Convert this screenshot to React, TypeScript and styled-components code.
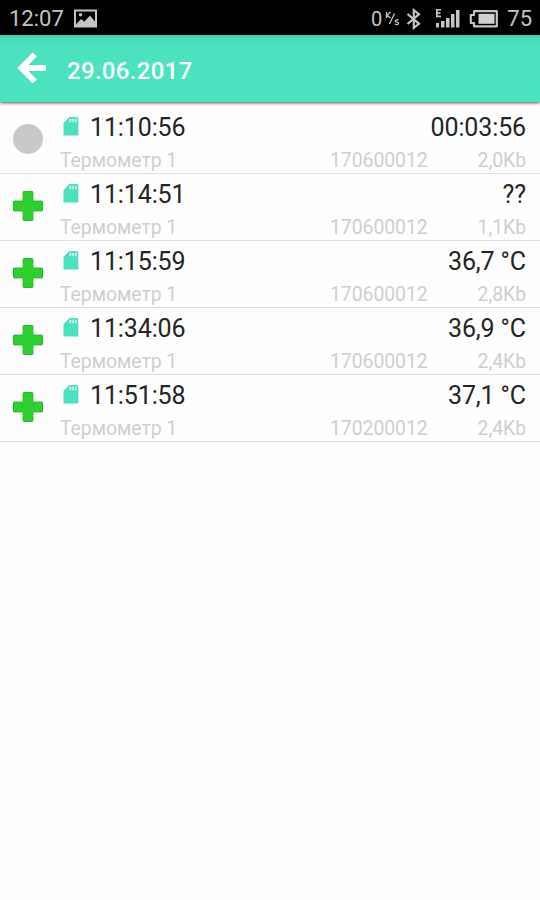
import styled, { createGlobalStyle } from 'styled-components';

type RecordStatus = 'empty' | 'new';

interface MeasureRecord {
  time: string;
  value: string;
  device: string;
  serial: string;
  size: string;
  status: RecordStatus;
}

const records: MeasureRecord[] = [
  { time: '11:10:56', value: '00:03:56', device: 'Термометр 1', serial: '170600012', size: '2,0Kb', status: 'empty' },
  { time: '11:14:51', value: '??', device: 'Термометр 1', serial: '170600012', size: '1,1Kb', status: 'new' },
  { time: '11:15:59', value: '36,7 °C', device: 'Термометр 1', serial: '170600012', size: '2,8Kb', status: 'new' },
  { time: '11:34:06', value: '36,9 °C', device: 'Термометр 1', serial: '170600012', size: '2,4Kb', status: 'new' },
  { time: '11:51:58', value: '37,1 °C', device: 'Термометр 1', serial: '170200012', size: '2,4Kb', status: 'new' },
];

const GlobalStyle = createGlobalStyle`
  * {
    box-sizing: border-box;
  }
  body {
    margin: 0;
    background-color: #fefefe;
    font-family: Roboto, 'Liberation Sans', sans-serif;
  }
  svg {
    display: block;
    flex: none;
  }
`;

const Screen = styled.div`
  width: 540px;
  height: 900px;
  background-color: #fefefe;
  overflow: hidden;
`;

const StatusBar = styled.div`
  display: flex;
  align-items: center;
  justify-content: space-between;
  height: 35px;
  padding: 2px 8px 0 9px;
  background-color: #000000;
  color: #c4c4c4;
  font-size: 22px;
  line-height: 26px;
`;

const StatusGroup = styled.div<{ $gap: number }>`
  display: flex;
  align-items: center;
  gap: ${({ $gap }) => $gap}px;
`;

const Speed = styled.span`
  display: flex;
  align-items: center;
  gap: 3px;
  font-size: 20px;
`;

const AppBar = styled.div`
  display: flex;
  align-items: center;
  gap: 20px;
  height: 67px;
  padding: 0 17px;
  background: linear-gradient(#43c9a7 0, #4ad8b6 3px, #4ce2c0 12px, #4ce3c1 100%);
  box-shadow: 0 1px 3px #000000aa;
`;

const Title = styled.h1`
  margin: 5px 0 0;
  color: #ffffff;
  font-size: 24px;
  font-weight: 500;
  line-height: 30px;
  letter-spacing: 0.3px;
`;

const List = styled.ul`
  margin: 0;
  padding: 5px 0 0;
  list-style: none;
`;

const Row = styled.li`
  display: flex;
  height: 67px;
  padding-right: 14px;
  border-bottom: 1px solid #e0e0e0;
`;

const StatusCell = styled.div`
  display: flex;
  align-items: center;
  justify-content: center;
  width: 56px;
  flex: none;
  padding-bottom: 2px;
`;

const EmptyMark = styled.div`
  width: 30px;
  height: 30px;
  border-radius: 50%;
  background-color: #c9c9c9;
`;

const Details = styled.div`
  flex: 1;
  padding-left: 4px;
`;

const MainLine = styled.div`
  display: flex;
  align-items: center;
  height: 42px;
  color: #242424;
  font-size: 25px;
  line-height: 42px;
  letter-spacing: -0.12px;

  svg {
    margin-bottom: 5px;
  }
`;

const Time = styled.span`
  flex: 1;
  padding-left: 10px;
`;

const SubLine = styled.div`
  display: grid;
  grid-template-columns: 1fr 99px 97px;
  height: 24px;
  color: #cfcfcf;
  font-size: 19.4px;
  line-height: 23px;
  letter-spacing: -0.05px;
`;

const Size = styled.span`
  text-align: right;
`;

const PictureIcon = () => (
  <svg width='23' height='19' viewBox='0 0 23 19'>
    <path fill='#c4c4c4' fillRule='evenodd' d='M0 0.5h23v18H0zM2 2.5v12.8l5.2-5.2 3 2.6L16 6.5l5 6V2.5z' />
    <circle cx='6.5' cy='5.8' r='1.7' fill='#c4c4c4' />
  </svg>
);

const SpeedUnitIcon = () => (
  <svg width='15' height='16' viewBox='0 0 15 16' fill='none' stroke='#c4c4c4' strokeWidth='1.3'>
    <path d='M1.5 1v6M5.5 1L2 4.4L5.7 7M9.5 2.5L4.5 13M13.5 9.3c-1-1-3.4-.6-3.2.8.2 1.4 3.4.7 3.2 2.4-.2 1.5-2.6 1.5-3.6.4' />
  </svg>
);

const BluetoothIcon = () => (
  <svg width='16' height='22' viewBox='0 0 16 22' fill='none' stroke='#c4c4c4' strokeWidth='2.2'>
    <path d='M1.5 6L13 15.8L7.8 19.8V2.2L13 6.2L1.5 16' />
  </svg>
);

const SignalIcon = () => (
  <svg width='25' height='20' viewBox='0 0 25 20' fill='#c4c4c4'>
    <path d='M1 0h5v1.6H2.7v1.7H5.5v1.6H2.7v1.7H6v1.6H1z' />
    <path d='M1 14h3v4.5H1zM6 12h3.5v6.5H6zM11 9h3.5v9.5h-3.5zM16 5h3.5v13.5h-3.5zM21 1h3.5v17.5h-3.5z' />
  </svg>
);

const BatteryIcon = () => (
  <svg width='29' height='18' viewBox='0 0 29 18'>
    <path d='M5 1.2H27.8V16.3H5V13H1.8V5H5z' fill='none' stroke='#c4c4c4' strokeWidth='2.2' strokeLinejoin='round' />
    <rect x='9.5' y='3.8' width='16' height='10' fill='#d0d0d0' />
  </svg>
);

const BackIcon = () => (
  <svg width='30' height='34' viewBox='0 0 30 34' fill='none' stroke='#ffffff' strokeWidth='5.8'>
    <path d='M17.8 2.5L4.4 16L17.8 29.5M4.4 16H28.8' />
  </svg>
);

const CardIcon = () => (
  <svg width='20' height='20' viewBox='0 0 20 20'>
    <path d='M9.5 1H16.7Q18.3 1 18.3 2.6V19.5H3.5V7z' fill='#4ce0be' />
    <path d='M9.4 2.8h1.8v3.4H9.4zM12.2 2.8H14v3.4h-1.8zM15 2.8h1.6v3.4H15z' fill='#c5f6e9' />
  </svg>
);

const PlusIcon = () => (
  <svg width='32' height='32' viewBox='0 0 32 32'>
    <path
      d='M12 1.5h8q.9 0 .9.9v8.7h8.7q.9 0 .9.9v8q0 .9-.9.9h-8.7v8.7q0 .9-.9.9h-8q-.9 0-.9-.9v-8.7H2.4q-.9 0-.9-.9v-8q0-.9.9-.9h8.7V2.4q0-.9.9-.9z'
      fill='#30cf30'
      stroke='#20bd24'
      strokeWidth='1'
    />
  </svg>
);

const RecordRow = ({ record }: { record: MeasureRecord }) => (
  <Row>
    <StatusCell>{record.status === 'empty' ? <EmptyMark /> : <PlusIcon />}</StatusCell>
    <Details>
      <MainLine>
        <CardIcon />
        <Time>{record.time}</Time>
        <span>{record.value}</span>
      </MainLine>
      <SubLine>
        <span>{record.device}</span>
        <span>{record.serial}</span>
        <Size>{record.size}</Size>
      </SubLine>
    </Details>
  </Row>
);

const App = () => {
  return (
    <Screen>
      <GlobalStyle />
      <StatusBar>
        <StatusGroup $gap={10}>
          <span>12:07</span>
          <PictureIcon />
        </StatusGroup>
        <StatusGroup $gap={9}>
          <StatusGroup $gap={13}>
            <StatusGroup $gap={6}>
              <Speed>
                0
                <SpeedUnitIcon />
              </Speed>
              <BluetoothIcon />
            </StatusGroup>
            <SignalIcon />
          </StatusGroup>
          <BatteryIcon />
          <span>75</span>
        </StatusGroup>
      </StatusBar>
      <AppBar>
        <BackIcon />
        <Title>29.06.2017</Title>
      </AppBar>
      <List>
        {records.map((record) => (
          <RecordRow key={record.time} record={record} />
        ))}
      </List>
    </Screen>
  );
};

export default App;
